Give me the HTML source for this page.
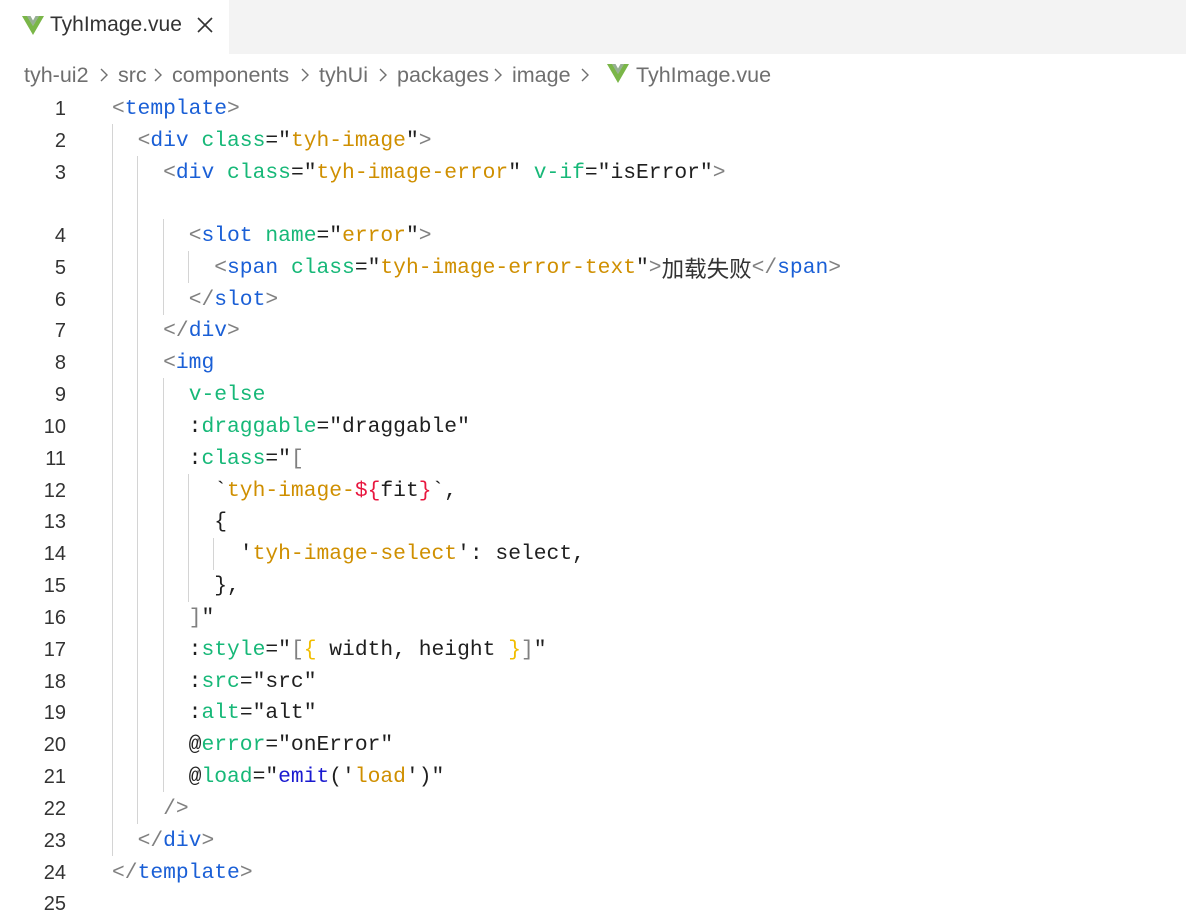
<!DOCTYPE html>
<html><head><meta charset="utf-8"><style>
body{margin:0;width:1186px;height:896px;background:#fff;position:relative;overflow:hidden;font-family:"Liberation Sans",sans-serif}
.tabbar{position:absolute;left:0;top:0;width:1186px;height:54px;background:#f3f3f3}
.tab{position:absolute;left:0;top:0;width:229px;height:54px;background:#fff}
.tab .name{position:absolute;left:50px;top:13px;font-size:21px;color:#333}
.cr{position:absolute;top:62px;font-size:21.5px;color:#6f6f6f;white-space:pre;line-height:26px}
.ln{position:absolute;left:0;width:66px;text-align:right;font-size:20px;color:#333;font-family:"Liberation Sans",sans-serif;line-height:26px;margin-top:2px}
.code{position:absolute;left:112px;font-family:"Liberation Mono","Noto Sans CJK SC",monospace;font-size:21.3px;line-height:26px;white-space:pre;color:#1f1f1f;margin-top:2px}
.g{position:absolute;width:1px;background:#d4d4d4}
.b{color:#808080}.t{color:#1a5fd6}.a{color:#17b878}.s{color:#cf8f00}.r{color:#e8173f}.y{color:#f1bd00}
.cj{font-family:"Noto Sans CJK SC",sans-serif;color:#333;font-size:22.5px;line-height:26px;vertical-align:top}
</style></head><body>
<div class="tabbar"><div class="tab">
<svg style="position:absolute;left:22px;top:16px" width="22" height="19" viewBox="0 0 22 19"><path d="M0 0h5l6 10 6-10h5L11 19z" fill="#7ab648"/><path d="M5 0h3.5L11 4.5 13.5 0H17L11 10z" fill="#3f6e3a" opacity=".55"/></svg>
<span class="name">TyhImage.vue</span>
<svg style="position:absolute;left:197px;top:17px" width="16" height="16" viewBox="0 0 16 16"><path d="M1 1L15 15M15 1L1 15" stroke="#333" stroke-width="1.6"/></svg>
</div></div>
<div class="cr" style="left:24px">tyh-ui2</div>
<div class="cr" style="left:118px">src</div>
<div class="cr" style="left:172px">components</div>
<div class="cr" style="left:319px">tyhUi</div>
<div class="cr" style="left:397px">packages</div>
<div class="cr" style="left:512px">image</div>
<svg style="position:absolute;left:0;top:62px" width="600" height="26"><g fill="none" stroke="#6f6f6f" stroke-width="1.4"><path d="M101 7l6 6-6 6"/><path d="M155 7l6 6-6 6"/><path d="M302 7l6 6-6 6"/><path d="M380 7l6 6-6 6"/><path d="M495 7l6 6-6 6"/><path d="M582 7l6 6-6 6"/></g></svg>
<svg style="position:absolute;left:607px;top:64px" width="22" height="19" viewBox="0 0 22 19"><path d="M0 0h5l6 10 6-10h5L11 19z" fill="#7ab648"/><path d="M5 0h3.5L11 4.5 13.5 0H17L11 10z" fill="#3f6e3a" opacity=".55"/></svg>
<div class="cr" style="left:636px;font-size:21.5px">TyhImage.vue</div>

<div class="g" style="left:112px;top:124px;height:732px"></div>
<div class="g" style="left:137px;top:156px;height:668px"></div>
<div class="g" style="left:163px;top:219px;height:96px"></div>
<div class="g" style="left:188px;top:251px;height:32px"></div>
<div class="g" style="left:163px;top:378px;height:414px"></div>
<div class="g" style="left:188px;top:474px;height:128px"></div>
<div class="g" style="left:213px;top:538px;height:32px"></div>

<div class="ln" style="top:94px">1</div><div class="code" style="top:94px"><span class="b">&lt;</span><span class="t">template</span><span class="b">&gt;</span></div>
<div class="ln" style="top:126px">2</div><div class="code" style="top:126px">  <span class="b">&lt;</span><span class="t">div</span> <span class="a">class</span>="<span class="s">tyh-image</span>"<span class="b">&gt;</span></div>
<div class="ln" style="top:158px">3</div><div class="code" style="top:158px">    <span class="b">&lt;</span><span class="t">div</span> <span class="a">class</span>="<span class="s">tyh-image-error</span>" <span class="a">v-if</span>="isError"<span class="b">&gt;</span></div>
<div class="ln" style="top:221px">4</div><div class="code" style="top:221px">      <span class="b">&lt;</span><span class="t">slot</span> <span class="a">name</span>="<span class="s">error</span>"<span class="b">&gt;</span></div>
<div class="ln" style="top:253px">5</div><div class="code" style="top:253px">        <span class="b">&lt;</span><span class="t">span</span> <span class="a">class</span>="<span class="s">tyh-image-error-text</span>"<span class="b">&gt;</span><span class="cj">加载失败</span><span class="b">&lt;/</span><span class="t">span</span><span class="b">&gt;</span></div>
<div class="ln" style="top:285px">6</div><div class="code" style="top:285px">      <span class="b">&lt;/</span><span class="t">slot</span><span class="b">&gt;</span></div>
<div class="ln" style="top:316px">7</div><div class="code" style="top:316px">    <span class="b">&lt;/</span><span class="t">div</span><span class="b">&gt;</span></div>
<div class="ln" style="top:348px">8</div><div class="code" style="top:348px">    <span class="b">&lt;</span><span class="t">img</span></div>
<div class="ln" style="top:380px">9</div><div class="code" style="top:380px">      <span class="a">v-else</span></div>
<div class="ln" style="top:412px">10</div><div class="code" style="top:412px">      :<span class="a">draggable</span>="draggable"</div>
<div class="ln" style="top:444px">11</div><div class="code" style="top:444px">      :<span class="a">class</span>="<span class="b">[</span></div>
<div class="ln" style="top:476px">12</div><div class="code" style="top:476px">        `<span class="s">tyh-image-</span><span class="r">${</span>fit<span class="r">}</span>`,</div>
<div class="ln" style="top:507px">13</div><div class="code" style="top:507px">        {</div>
<div class="ln" style="top:539px">14</div><div class="code" style="top:539px">          '<span class="s">tyh-image-select</span>': select,</div>
<div class="ln" style="top:571px">15</div><div class="code" style="top:571px">        },</div>
<div class="ln" style="top:603px">16</div><div class="code" style="top:603px">      <span class="b">]</span>"</div>
<div class="ln" style="top:635px">17</div><div class="code" style="top:635px">      :<span class="a">style</span>="<span class="b">[</span><span class="y">{</span> width, height <span class="y">}</span><span class="b">]</span>"</div>
<div class="ln" style="top:667px">18</div><div class="code" style="top:667px">      :<span class="a">src</span>="src"</div>
<div class="ln" style="top:698px">19</div><div class="code" style="top:698px">      :<span class="a">alt</span>="alt"</div>
<div class="ln" style="top:730px">20</div><div class="code" style="top:730px">      @<span class="a">error</span>="onError"</div>
<div class="ln" style="top:762px">21</div><div class="code" style="top:762px">      @<span class="a">load</span>="<span style="color:#1a1ad0">emit</span>('<span class="s">load</span>')"</div>
<div class="ln" style="top:794px">22</div><div class="code" style="top:794px">    <span class="b">/&gt;</span></div>
<div class="ln" style="top:826px">23</div><div class="code" style="top:826px">  <span class="b">&lt;/</span><span class="t">div</span><span class="b">&gt;</span></div>
<div class="ln" style="top:858px">24</div><div class="code" style="top:858px"><span class="b">&lt;/</span><span class="t">template</span><span class="b">&gt;</span></div>
<div class="ln" style="top:889px">25</div>
</body></html>
